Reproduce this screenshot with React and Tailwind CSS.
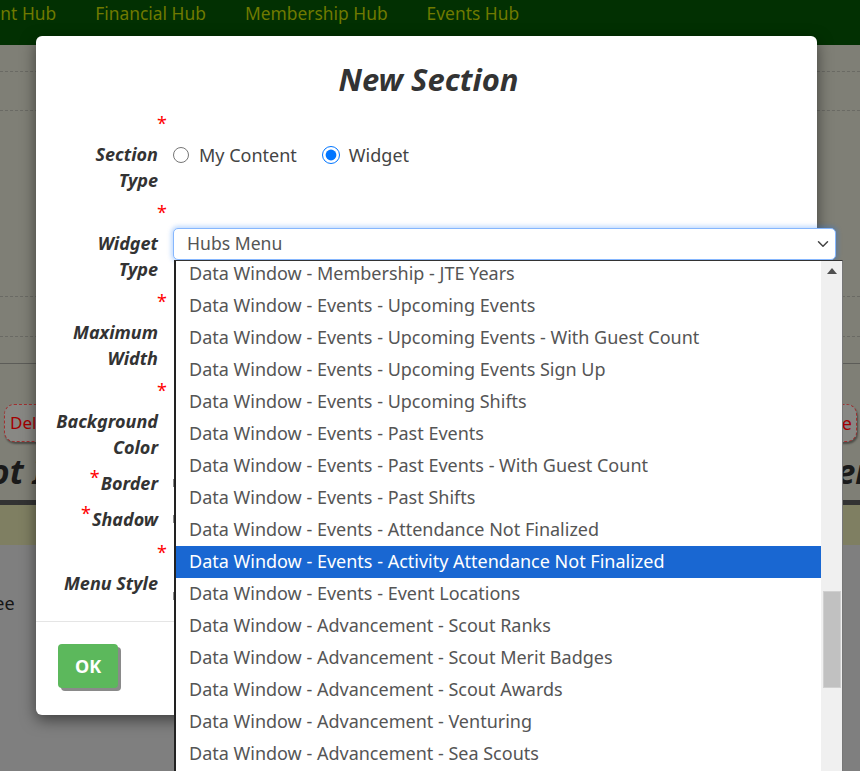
import React from "react";
import { ChevronDown } from "lucide-react";

const options = [
  "Data Window - Membership - JTE Years",
  "Data Window - Events - Upcoming Events",
  "Data Window - Events - Upcoming Events - With Guest Count",
  "Data Window - Events - Upcoming Events Sign Up",
  "Data Window - Events - Upcoming Shifts",
  "Data Window - Events - Past Events",
  "Data Window - Events - Past Events - With Guest Count",
  "Data Window - Events - Past Shifts",
  "Data Window - Events - Attendance Not Finalized",
  "Data Window - Events - Activity Attendance Not Finalized",
  "Data Window - Events - Event Locations",
  "Data Window - Advancement - Scout Ranks",
  "Data Window - Advancement - Scout Merit Badges",
  "Data Window - Advancement - Scout Awards",
  "Data Window - Advancement - Venturing",
  "Data Window - Advancement - Sea Scouts",
];

const StackedRow = ({ lines, children }) => (
  <div className="flex h-[89px] gap-[15px] pt-[36px]">
    <div className="relative w-[122px] shrink-0 text-right text-[18px] leading-[26px] font-bold italic text-[#333]">
      <span className="absolute top-[-31px] right-[-9px] text-[18px] leading-[26px] font-normal not-italic text-[#f00]">*</span>
      {lines.map((l) => (
        <div key={l}>{l}</div>
      ))}
    </div>
    {children}
  </div>
);

const InlineRow = ({ label }) => (
  <div className="flex h-[26px] gap-[15px]">
    <div className="w-[122px] shrink-0 text-right text-[18px] leading-[26px] font-bold italic text-[#333]">
      <span className="relative top-[-6px] left-[-1px] font-normal not-italic text-[#f00]">*</span>
      {label}
    </div>
    <div className="h-[8px] w-[2px] self-center bg-[#8a8a8a]"></div>
  </div>
);

const App = () => {
  return (
    <div className="relative h-[771px] w-[860px] overflow-hidden bg-[#7f7f7f] font-['Noto_Sans',sans-serif]">
      {/* Page behind the dialog */}
      <div className="flex h-[45px] gap-[40px] overflow-hidden bg-[#023002] text-[17.4px] leading-[27px] text-[#6f7a00]">
        <span className="ml-[-48px]">Content Hub</span>
        <span className="ml-[-1px]">Financial Hub</span>
        <span className="ml-[-1px]">Membership Hub</span>
        <span className="ml-[-1px]">Events Hub</span>
      </div>
      <div className="h-[500px] bg-[#7f7f76]">
        <div className="h-[27px] border-b border-dashed border-[#6a6a64]"></div>
        <div className="h-[39px] border-b border-dashed border-[#6a6a64]"></div>
        <div className="h-[186px] border-b border-dashed border-[#6a6a64]"></div>
        <div className="h-[40px] border-b border-dashed border-[#6a6a64]"></div>
        <div className="h-[27px] border-b border-[#5c5c58]"></div>
        <div className="flex justify-between px-[3px] pt-[40px] text-[18px] text-[#a30000]">
          <span className="ml-[1px] h-[38px] w-[70px] rounded-[10px] border border-dashed border-[#a03030] bg-[#888884] pl-[5px] text-[17px] leading-[36px] shadow-[1px_2px_2px_rgba(0,0,0,0.4)]">Delete</span>
          <span className="h-[38px] w-[70px] rounded-[10px] border border-dashed border-[#a03030] bg-[#888884] pr-[4px] text-right leading-[36px] shadow-[1px_2px_2px_rgba(0,0,0,0.4)]">Place</span>
        </div>
        <div className="flex h-[63px] justify-between overflow-hidden border-b-[5px] border-[#333] text-[34px] leading-[58px] font-bold italic whitespace-nowrap text-[#1a1a1a]">
          <span className="ml-[-36px]">Not Included</span>
          <span className="mr-[-46px]">Events</span>
        </div>
        <div className="h-[40px] bg-[#7f7f62]"></div>
      </div>
      <div className="ml-[-15px] pt-[44px] text-[18px] leading-[28px] text-[#161616]">Fee</div>

      {/* Dialog */}
      <div className="absolute top-[36px] left-[36px] flex h-[679px] w-[781px] flex-col rounded-[6px] bg-white shadow-[0_5px_15px_rgba(0,0,0,0.5)]">
        <h2 className="h-[69px] pt-[23px] pl-[4px] text-center text-[31px] leading-[40px] font-bold italic text-[#333]">New Section</h2>
        <div className="h-[516px]">
          <StackedRow lines={["Section", "Type"]}>
            <div className="mt-[1px] flex h-[26px] items-center text-[18px] text-[#444]">
              <input type="radio" name="sectionType" className="h-[16px] w-[16px]" />
              <span className="ml-[10px]">My Content</span>
              <input type="radio" name="sectionType" defaultChecked className="ml-[25px] h-[18px] w-[18px]" />
              <span className="ml-[9px]">Widget</span>
            </div>
          </StackedRow>
          <StackedRow lines={["Widget", "Type"]} />
          <StackedRow lines={["Maximum", "Width"]} />
          <StackedRow lines={["Background", "Color"]} />
          <div className="flex flex-col gap-[10px] pt-[9px] pb-[2px]">
            <InlineRow label="Border" />
            <InlineRow label="Shadow" />
          </div>
          <StackedRow lines={["Menu Style"]}>
            <div className="mt-[-2px] h-[8px] w-[2px] self-center bg-[#8a8a8a]"></div>
          </StackedRow>
        </div>
        <div className="border-t border-[#e5e5e5] pt-[22px] pl-[22px]">
          <button className="h-[44px] w-[60px] rounded-[4px] bg-[#5cb85c] text-[18px] font-bold text-white shadow-[3px_3px_0_#8a8a8a]">OK</button>
        </div>
      </div>

      {/* Open select, wider than the dialog */}
      <div className="absolute top-[228px] left-[173px] flex h-[32px] w-[663px] items-center justify-between rounded-[5px] border border-[#86b7fe] bg-white pr-[3px] pb-[2px] pl-[13px] text-[17.6px] text-[#555] shadow-[0_0_4px_2px_rgba(13,110,253,0.25)]">
        Hubs Menu
        <ChevronDown size={18} strokeWidth={2} className="mt-[2px] text-[#444]" />
      </div>
      <div className="absolute top-[260px] left-[174px] flex h-[511px] w-[669px] overflow-hidden border-t border-r border-l-2 border-t-[#333] border-r-[#777] border-l-[#222] bg-white">
        <div className="mt-[-3px] flex-1">
          {options.map((o, i) => (
            <div key={o} className={`h-[32px] pl-[13px] text-[18px] leading-[30px] ${i === 9 ? "bg-[#1967d2] text-white" : "text-[#555]"}`}>{o}</div>
          ))}
        </div>
        <div className="relative w-[21px] shrink-0 bg-[#f0f0f0]">
          <svg className="absolute top-[7px] left-[6px]" width="10" height="6" viewBox="0 0 10 6">
            <path d="M5 0 L10 6 L0 6 Z" fill="#505050" />
          </svg>
          <div className="absolute top-[330px] left-[2px] h-[97px] w-[18px] border border-[#d0d0d0] bg-[#c1c1c1]"></div>
        </div>
      </div>
    </div>
  );
};

export default App;
